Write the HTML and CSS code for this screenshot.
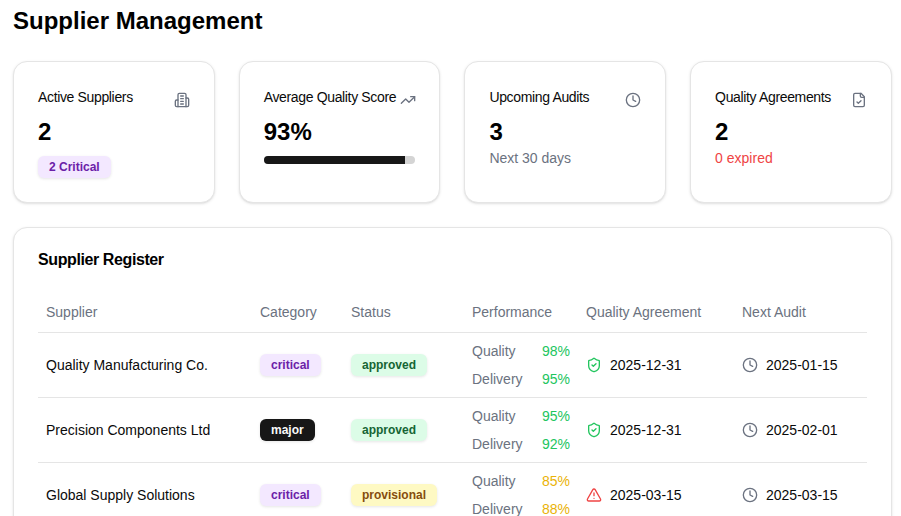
FILE: index.html
```html
<!DOCTYPE html>
<html lang="en">
<head>
<meta charset="utf-8">
<title>Supplier Management</title>
<link rel="stylesheet" href="styles.css">
</head>
<body>
<svg class="sprites" width="0" height="0" aria-hidden="true">
  <symbol id="clock" viewBox="0 0 24 24"><circle cx="12" cy="12" r="10"/><path d="M12 6v6l4 2"/></symbol>
  <symbol id="shield" viewBox="0 0 24 24"><path d="M20 13c0 5-3.5 7.5-7.66 8.95a1 1 0 0 1-.67-.01C7.5 20.5 4 18 4 13V6a1 1 0 0 1 1-1c2 0 4.5-1.2 6.24-2.72a1.17 1.17 0 0 1 1.52 0C14.51 3.81 17 5 19 5a1 1 0 0 1 1 1z"/><path d="m9 12 2 2 4-4"/></symbol>
  <symbol id="alert" viewBox="0 0 24 24"><path d="m21.73 18-8-14a2 2 0 0 0-3.48 0l-8 14A2 2 0 0 0 4 21h16a2 2 0 0 0 1.73-3"/><path d="M12 9v4"/><path d="M12 17h.01"/></symbol>
</svg>
<main class="page">
  <h1 class="title">Supplier Management</h1>
  <section class="stats">
    <article class="card stat">
      <div class="stat-head">
        <h2 class="stat-label">Active Suppliers</h2>
        <svg class="icon muted" viewBox="0 0 24 24"><path d="M6 22V4a2 2 0 0 1 2-2h8a2 2 0 0 1 2 2v18z"/><path d="M6 12H4a2 2 0 0 0-2 2v6a2 2 0 0 0 2 2h2"/><path d="M18 9h2a2 2 0 0 1 2 2v9a2 2 0 0 1-2 2h-2"/><path d="M10 6h4"/><path d="M10 10h4"/><path d="M10 14h4"/><path d="M10 18h4"/></svg>
      </div>
      <div class="stat-value">2</div>
      <span class="badge badge-critical stat-badge">2 Critical</span>
    </article>
    <article class="card stat">
      <div class="stat-head">
        <h2 class="stat-label">Average Quality Score</h2>
        <svg class="icon muted" viewBox="0 0 24 24"><path d="M16 7h6v6"/><path d="m22 7-8.5 8.5-5-5L2 17"/></svg>
      </div>
      <div class="stat-value">93%</div>
      <div class="progress"><div class="progress-fill" style="width:93%"></div></div>
    </article>
    <article class="card stat">
      <div class="stat-head">
        <h2 class="stat-label">Upcoming Audits</h2>
        <svg class="icon muted"><use href="#clock"/></svg>
      </div>
      <div class="stat-value">3</div>
      <p class="stat-note">Next 30 days</p>
    </article>
    <article class="card stat">
      <div class="stat-head">
        <h2 class="stat-label">Quality Agreements</h2>
        <svg class="icon muted" viewBox="0 0 24 24"><path d="M15 2H6a2 2 0 0 0-2 2v16a2 2 0 0 0 2 2h12a2 2 0 0 0 2-2V7z"/><path d="M14 2v4a2 2 0 0 0 2 2h4"/><path d="m9 15 2 2 4-4"/></svg>
      </div>
      <div class="stat-value">2</div>
      <p class="stat-note expired">0 expired</p>
    </article>
  </section>
  <section class="card register">
    <h2 class="register-title">Supplier Register</h2>
    <table class="table">
      <colgroup>
        <col class="col-supplier"><col class="col-category"><col class="col-status"><col class="col-perf"><col class="col-agreement"><col class="col-audit">
      </colgroup>
      <thead>
        <tr><th>Supplier</th><th>Category</th><th>Status</th><th>Performance</th><th>Quality Agreement</th><th>Next Audit</th></tr>
      </thead>
      <tbody>
        <tr>
          <td>Quality Manufacturing Co.</td>
          <td><span class="badge badge-critical">critical</span></td>
          <td><span class="badge badge-approved">approved</span></td>
          <td>
            <div class="perf"><span>Quality</span><span class="good">98%</span></div>
            <div class="perf"><span>Delivery</span><span class="good">95%</span></div>
          </td>
          <td><div class="date"><svg class="icon good-icon"><use href="#shield"/></svg>2025-12-31</div></td>
          <td><div class="date"><svg class="icon muted"><use href="#clock"/></svg>2025-01-15</div></td>
        </tr>
        <tr>
          <td>Precision Components Ltd</td>
          <td><span class="badge badge-major">major</span></td>
          <td><span class="badge badge-approved">approved</span></td>
          <td>
            <div class="perf"><span>Quality</span><span class="good">95%</span></div>
            <div class="perf"><span>Delivery</span><span class="good">92%</span></div>
          </td>
          <td><div class="date"><svg class="icon good-icon"><use href="#shield"/></svg>2025-12-31</div></td>
          <td><div class="date"><svg class="icon muted"><use href="#clock"/></svg>2025-02-01</div></td>
        </tr>
        <tr>
          <td>Global Supply Solutions</td>
          <td><span class="badge badge-critical">critical</span></td>
          <td><span class="badge badge-provisional">provisional</span></td>
          <td>
            <div class="perf"><span>Quality</span><span class="warn">85%</span></div>
            <div class="perf"><span>Delivery</span><span class="warn">88%</span></div>
          </td>
          <td><div class="date"><svg class="icon bad-icon"><use href="#alert"/></svg>2025-03-15</div></td>
          <td><div class="date"><svg class="icon muted"><use href="#clock"/></svg>2025-03-15</div></td>
        </tr>
      </tbody>
    </table>
  </section>
</main>
</body>
</html>
```
FILE: styles.css
```css
* { box-sizing: border-box; }
html, body { margin: 0; background: #fff; }
body { font-family: "Liberation Sans", Arial, sans-serif; color: #0a0a0a; font-size: 14px; }
.sprites { position: absolute; }
.page { padding: 6px 9.2px 24px 13px; display: flex; flex-direction: column; }
.title { margin: 0 0 26px; font-size: 24px; line-height: 29px; font-weight: 700; color: #000; }
.stats { display: grid; grid-template-columns: repeat(4, minmax(0, 1fr)); gap: 24px; margin-bottom: 24px; }
.card { background: #fff; border: 1px solid #e5e5e5; border-radius: 14px; box-shadow: 0 1px 3px rgba(0,0,0,.1), 0 1px 2px -1px rgba(0,0,0,.1); }
.stat { height: 142px; padding: 24px; }
.stat-head { display: flex; justify-content: space-between; align-items: flex-start; gap: 4px; }
.stat-label { margin: -1px 0 0; font-size: 14px; line-height: 24px; font-weight: 400; height: 24px; letter-spacing: -0.025em; white-space: nowrap; }
.icon { width: 16px; height: 16px; flex: none; fill: none; stroke: currentColor; stroke-width: 2; stroke-linecap: round; stroke-linejoin: round; }
.stat-head .icon { margin-top: 6px; }
.muted { color: #6b7280; }
.stat-value { font-size: 24px; font-weight: 700; line-height: 32px; margin-top: 7px; color: #000; }
.stat-note { margin: 0; font-size: 14px; line-height: 20px; color: #6b7280; }
.expired { color: #ef4444; }
.badge { display: inline-block; padding: 0 10px; height: 22px; font-size: 12px; line-height: 20px; font-weight: 700; border: 1px solid transparent; border-radius: 6px; box-shadow: 0 1px 3px rgba(0,0,0,.1); white-space: nowrap; vertical-align: middle; }
.stat-badge { margin-top: 8px; }
.badge-critical { background: #f3e8ff; color: #6b21a8; }
.badge-approved { background: #dcfce7; color: #166534; }
.badge-provisional { background: #fef9c3; color: #854d0e; }
.badge-major { background: #171717; color: #fafafa; }
.progress { height: 8px; margin-top: 8px; background: #d4d4d4; border-radius: 4px; overflow: hidden; }
.progress-fill { height: 100%; background: #171717; }
.register { padding: 24px; }
.register-title { margin: 0 0 24px; font-size: 16px; line-height: 16px; font-weight: 700; letter-spacing: -0.025em; color: #000; }
.table { width: 100%; border-collapse: collapse; table-layout: fixed; font-size: 14px; }
.col-supplier { width: 214px; }
.col-category { width: 91px; }
.col-status { width: 121px; }
.col-perf { width: 114px; }
.col-agreement { width: 156px; }
.col-audit { width: 132.8px; }
.table th { height: 40px; padding: 0 8px; text-align: left; font-weight: 400; color: #6b7280; border-bottom: 1px solid #e5e5e5; white-space: nowrap; }
.table td { height: 65px; padding: 0 8px; border-bottom: 1px solid #e5e5e5; vertical-align: middle; white-space: nowrap; }
.perf { display: flex; justify-content: space-between; line-height: 20px; color: #6b7280; }
.perf + .perf { margin-top: 8px; }
.good { color: #22c55e; }
.warn { color: #eab308; }
.date { display: flex; align-items: center; gap: 8px; }
.good-icon { color: #22c55e; }
.bad-icon { color: #ef4444; }
```
